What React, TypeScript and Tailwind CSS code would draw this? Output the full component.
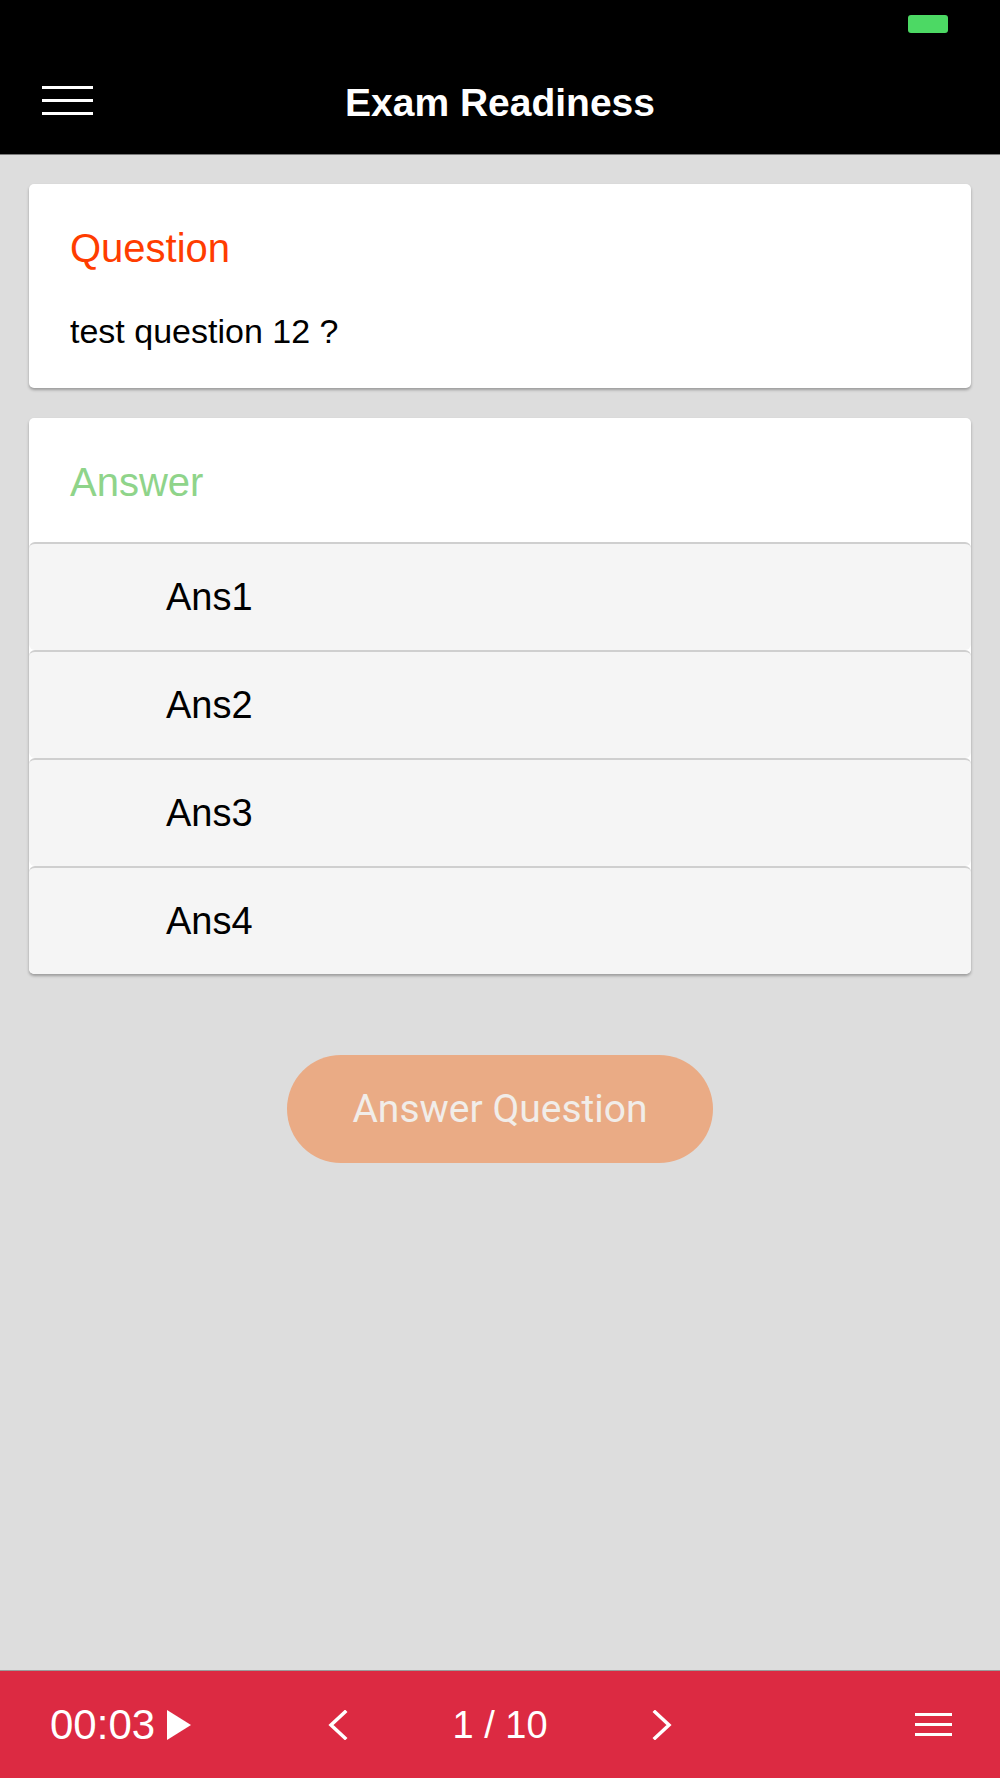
const answers = ["Ans1", "Ans2", "Ans3", "Ans4"];

function Hamburger({ big }: { big?: boolean }) {
  const line = big ? "h-[3px] w-[51px] bg-white" : "h-[3px] w-[37px] bg-white";
  return (
    <div className={big ? "flex flex-col gap-[10px]" : "flex flex-col gap-[7px]"}>
      <div className={line} />
      <div className={line} />
      <div className={line} />
    </div>
  );
}

function Chevron({ dir }: { dir: "left" | "right" }) {
  return (
    <svg width="20" height="30" viewBox="0 0 20 30">
      <polyline
        points={dir === "left" ? "17,2 3,15 17,28" : "3,2 17,15 3,28"}
        fill="none"
        stroke="white"
        strokeWidth="3.5"
        strokeLinecap="square"
      />
    </svg>
  );
}

export default function App() {
  return (
    <div className="flex h-[1778px] w-[1000px] flex-col bg-[#dddddd] font-['Liberation_Sans',Arial,sans-serif]">
      {/* header */}
      <div className="h-[155px] border-b border-[#7a7a7a] bg-black">
        <div className="flex h-[46px] justify-end pr-[52px] pt-[15px]">
          <div className="h-[18px] w-[40px] rounded-[3px] bg-[#4cd964]" />
        </div>
        <div className="grid h-[108px] grid-cols-[1fr_auto_1fr] items-center">
          <div className="pl-[42px]">
            <Hamburger big />
          </div>
          <h1 className="pt-[5px] text-[39px] font-bold leading-[48px] text-white">Exam Readiness</h1>
          <div />
        </div>
      </div>

      <main className="flex flex-1 flex-col px-[29px] pt-[29px]">
        <div className="rounded-[5px] bg-white px-[41px] pb-[37px] pt-[40px] shadow-[0_2px_3px_rgba(0,0,0,0.3)]">
          <div className="text-[40px] leading-[48px] text-[#ff3d00]">Question</div>
          <div className="mt-[39px] text-[34px] leading-[40px] text-black">test question 12 ?</div>
        </div>

        <div className="mt-[30px] overflow-hidden rounded-[5px] bg-white shadow-[0_2px_3px_rgba(0,0,0,0.3)]">
          <div className="px-[41px] pb-[36px] pt-[40px] text-[40px] leading-[48px] text-[#8fd48a]">
            Answer
          </div>
          {answers.map((a) => (
            <div
              key={a}
              className="h-[108px] rounded-[6px] border-t-2 border-[#cfcfcf] bg-[#f5f5f5] pl-[137px] text-[38px] leading-[106px] text-black"
            >
              {a}
            </div>
          ))}
        </div>

        <div className="mt-[81px] flex justify-center">
          <button className="h-[108px] w-[426px] rounded-full bg-[#eaab85] font-['Roboto',sans-serif] text-[39px] text-[#f1ede9]">
            Answer Question
          </button>
        </div>
      </main>

      {/* bottom bar */}
      <div className="grid h-[108px] grid-cols-[1fr_auto_1fr] items-center border-t border-[#9a9a9a] bg-[#dc2a42] text-white">
        <div className="flex items-center gap-[12px] pl-[50px]">
          <span className="text-[42px] leading-[48px]">00:03</span>
          <svg width="24" height="30" viewBox="0 0 24 30">
            <polygon points="0,0 24,15 0,30" fill="white" />
          </svg>
        </div>
        <div className="flex items-center gap-[104px]">
          <Chevron dir="left" />
          <span className="text-[38px] leading-[48px]">1 / 10</span>
          <Chevron dir="right" />
        </div>
        <div className="flex justify-end pr-[48px]">
          <Hamburger />
        </div>
      </div>
    </div>
  );
}
